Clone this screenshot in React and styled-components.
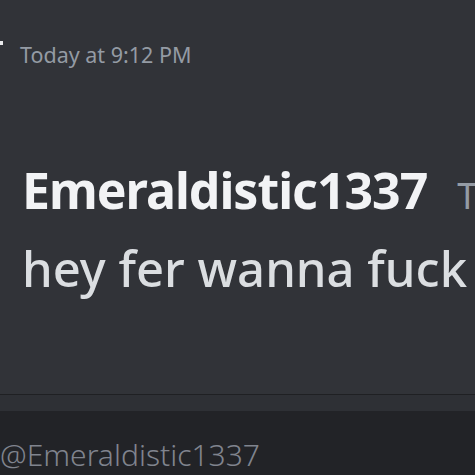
import React from 'react';
import styled, { createGlobalStyle } from 'styled-components';

const GlobalStyle = createGlobalStyle`
  html, body {
    margin: 0;
    padding: 0;
    background: #313338;
  }
  * { box-sizing: border-box; }
`;

const Screen = styled.div`
  width: 475px;
  height: 475px;
  background: #313338;
  overflow: hidden;
  display: flex;
  flex-direction: column;
  font-family: "Noto Sans", "Open Sans", sans-serif;
  position: relative;
`;

const Corner = styled.span`
  position: absolute;
  left: 0;
  top: 41px;
  width: 3px;
  height: 4px;
  background: #e8e9eb;
`;

const TimeRow = styled.div`
  padding: 40px 0 0 20px;
  height: 160px;
  flex-shrink: 0;
  color: #949ba4;
  font-size: 21.5px;
  line-height: 30px;
  white-space: nowrap;
`;

const Message = styled.div`
  padding-left: 22px;
  white-space: nowrap;
`;

const Header = styled.div`
  display: flex;
  align-items: baseline;
  gap: 30px;
  height: 60px;
`;

const Username = styled.span`
  color: #f2f3f5;
  font-weight: 700;
  font-size: 50px;
  line-height: 60px;
  letter-spacing: -1px;
`;

const Stamp = styled.span`
  color: #949ba4;
  font-size: 36px;
`;

const Body = styled.div`
  margin-top: 14px;
  color: #dbdee1;
  font-size: 49px;
  line-height: 68px;
  font-weight: 500;
`;

const Spacer = styled.div`
  flex: 1;
`;

const Band = styled.div`
  height: 17px;
  flex-shrink: 0;
  border-top: 1px solid #1f2023;
  background: #2e3035;
`;

const Footer = styled.div`
  height: 64px;
  flex-shrink: 0;
  background: #222327;
  color: #80848e;
  font-size: 30px;
  font-weight: 300;
  padding-top: 24px;
  line-height: 40px;
  white-space: nowrap;
`;

export default function App() {
  return (
    <>
      <GlobalStyle />
      <Screen>
        <Corner />
        <TimeRow>Today at 9:12 PM</TimeRow>
        <Message>
          <Header>
            <Username>Emeraldistic1337</Username>
            <Stamp>Today at 9:12 PM</Stamp>
          </Header>
          <Body>hey fer wanna fuck</Body>
        </Message>
        <Spacer />
        <Band />
        <Footer>@Emeraldistic1337</Footer>
      </Screen>
    </>
  );
}
